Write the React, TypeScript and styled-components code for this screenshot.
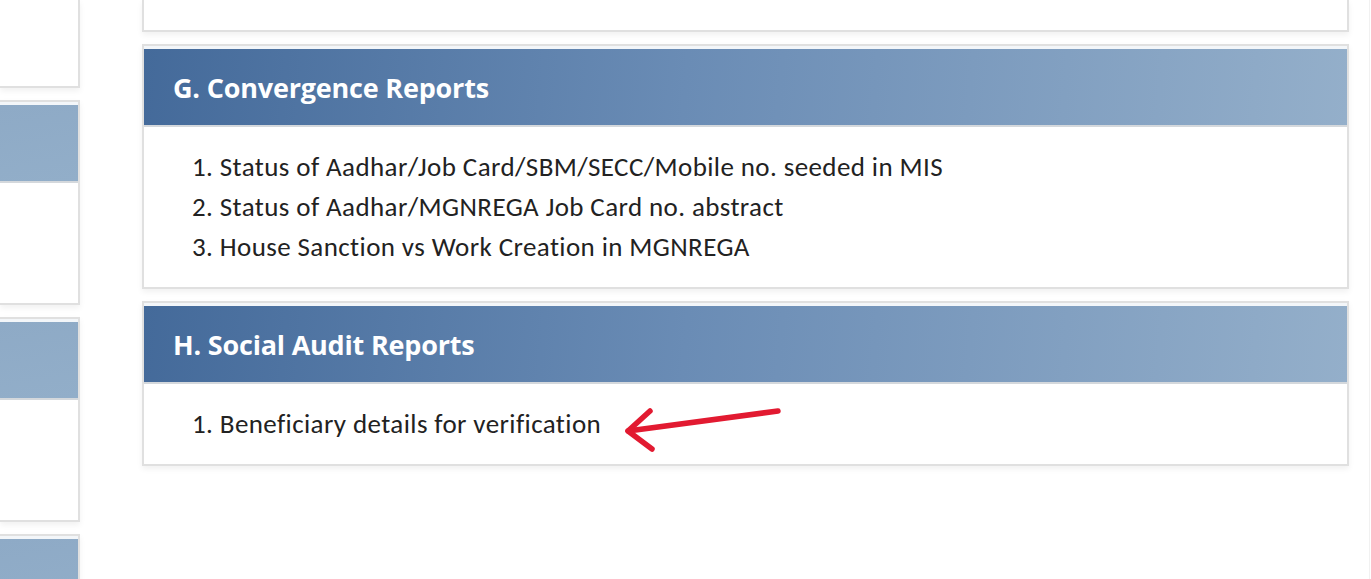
import React from "react";
import styled, { createGlobalStyle } from "styled-components";

const GlobalStyle = createGlobalStyle`
    html, body {
        margin: 0;
        padding: 0;
        background: #ffffff;
        overflow: hidden;
    }
    body {
        font-family: Calibri, Carlito, Lato, "Liberation Sans", sans-serif;
        color: #222222;
    }
`;

interface Section {
    title: string;
    items: string[];
}

const sections: Section[] = [
    {
        title: "G. Convergence Reports",
        items: [
            "Status of Aadhar/Job Card/SBM/SECC/Mobile no. seeded in MIS",
            "Status of Aadhar/MGNREGA Job Card no. abstract",
            "House Sanction vs Work Creation in MGNREGA",
        ],
    },
    {
        title: "H. Social Audit Reports",
        items: ["Beneficiary details for verification"],
    },
];

const App = () => {
    return (
        <>
            <GlobalStyle />
            <Page>
                <SideColumn>
                    <Panel cutTop>
                        <Body height={86} />
                    </Panel>
                    <Panel>
                        <Header light />
                        <Body height={120} />
                    </Panel>
                    <Panel>
                        <Header light />
                        <Body height={120} />
                    </Panel>
                    <Panel>
                        <Header light />
                        <Body height={120} />
                    </Panel>
                </SideColumn>

                <MainColumn>
                    <Panel cutTop>
                        <Body height={30} />
                    </Panel>
                    {sections.map((section, sIndex) => (
                        <Panel key={section.title}>
                            <Header>
                                <Title>{section.title}</Title>
                            </Header>
                            <ReportList>
                                {section.items.map((item, index) => (
                                    <ReportItem key={item}>
                                        {item}
                                        {sIndex === 1 && index === 0 && <Arrow />}
                                    </ReportItem>
                                ))}
                            </ReportList>
                        </Panel>
                    ))}
                </MainColumn>
                <EdgeLine />
            </Page>
        </>
    );
};

const Arrow = () => (
    <ArrowSvg width="170" height="56" viewBox="0 0 170 56">
        <g
            fill="none"
            stroke="#e21a31"
            strokeWidth="5.5"
            strokeLinecap="round"
            strokeLinejoin="round"
        >
            <path d="M158 8 L8 28" />
            <path d="M30 8 L8 28 L32 46" />
        </g>
    </ArrowSvg>
);

const Page = styled.div`
    display: flex;
    align-items: flex-start;
    width: 1371px;
    height: 579px;
    overflow: hidden;
`;

const SideColumn = styled.div`
    display: flex;
    flex-direction: column;
    gap: 12px;
    width: 80px;
    flex-shrink: 0;
`;

const MainColumn = styled.div`
    display: flex;
    flex-direction: column;
    gap: 12px;
    width: 1207px;
    margin-left: 62px;
    flex-shrink: 0;
`;

const EdgeLine = styled.div`
    width: 1px;
    height: 579px;
    margin-left: 20px;
    background: #f1f1f1;
`;

interface PanelProps {
    cutTop?: boolean;
}
const Panel = styled.div<PanelProps>`
    background: #ffffff;
    border: 2px solid #e0e0e0;
    border-top: ${({ cutTop }) => (cutTop ? "none" : "2px solid #e0e0e0")};
    box-shadow: 0 3px 6px rgba(0, 0, 0, 0.06);

    ${SideColumn} & {
        border-left: none;
    }
`;

interface HeaderProps {
    light?: boolean;
}
const Header = styled.div<HeaderProps>`
    display: flex;
    align-items: center;
    height: 76px;
    padding-left: 29px;
    border-top: 3px solid #f3f6f9;
    border-bottom: 2px solid #d4d8dc;
    background: ${({ light }) =>
        light
            ? "linear-gradient(170deg, #8eaac6, #92aec9)"
            : "linear-gradient(95deg, #446a9a 0%, #6a8cb5 45%, #94afca 100%)"};
`;

const Title = styled.h2`
    margin: 0;
    color: #ffffff;
    font-family: "Open Sans", Lato, sans-serif;
    font-size: 27px;
    font-weight: 700;
    letter-spacing: -0.2px;
`;

interface BodyProps {
    height: number;
}
const Body = styled.div<BodyProps>`
    height: ${({ height }) => height}px;
`;

const ReportList = styled.ol`
    margin: 0;
    padding: 20px 0 20px 48px;
    list-style-position: inside;
`;

const ReportItem = styled.li`
    position: relative;
    font-size: 27px;
    line-height: 40px;
    letter-spacing: 0.4px;
    color: #222222;
`;

const ArrowSvg = styled.svg`
    position: absolute;
    left: 428px;
    top: -1px;
`;

export default App;
